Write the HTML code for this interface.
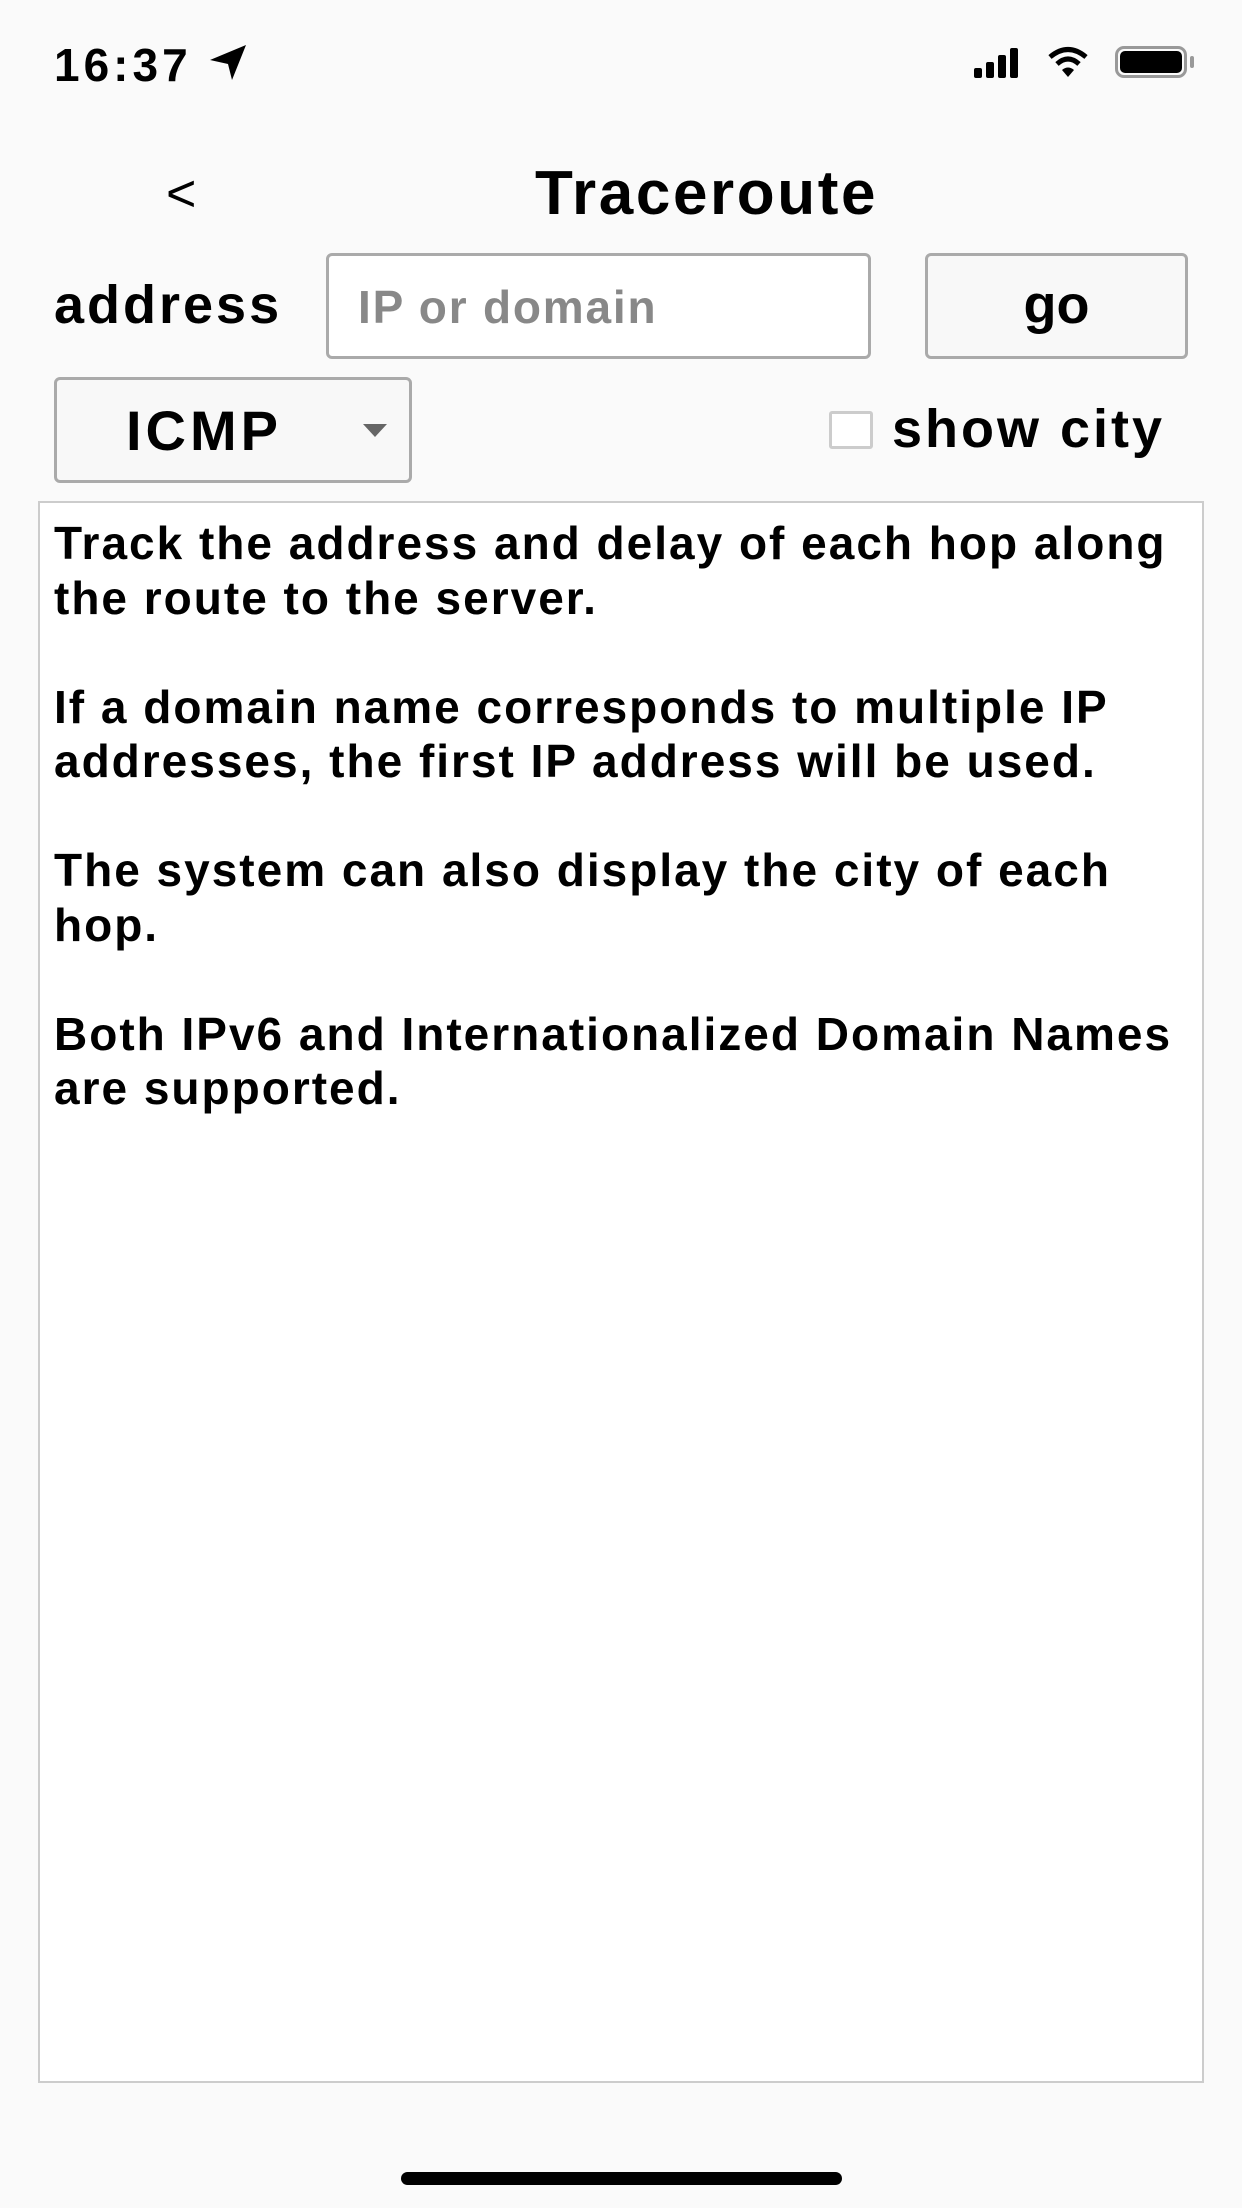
<!DOCTYPE html>
<html><head><meta charset="utf-8"><style>
*{margin:0;padding:0;box-sizing:border-box}
body{width:1242px;height:2208px;background:#fafafa;font-family:"Liberation Sans",sans-serif;position:relative;overflow:hidden;color:#000}
.a{position:absolute;white-space:nowrap}
</style></head><body>
<div class="a" style="left:54px;top:38px;font-size:46px;font-weight:bold;letter-spacing:4px;">16:37</div>
<svg class="a" style="left:206px;top:42px" width="46" height="40" viewBox="0 0 46 40"><path d="M4 18 L40 3 L26 38 L22 22 Z" fill="#000"/></svg>
<svg class="a" style="left:974px;top:48px" width="56" height="30"><rect x="0" y="20" width="8" height="10" rx="2"/><rect x="12" y="14" width="8" height="16" rx="2"/><rect x="24" y="7" width="8" height="23" rx="2"/><rect x="36" y="0" width="8" height="30" rx="2"/></svg>
<svg class="a" style="left:1048px;top:46px" width="40" height="32" viewBox="0 0 40 32"><path d="M2 11 Q20 -4 38 11" stroke="#000" stroke-width="5" fill="none"/><path d="M9 18 Q20 8 31 18" stroke="#000" stroke-width="5" fill="none"/><path d="M14 24 L20 31 L26 24 Q20 19 14 24Z" fill="#000"/></svg>
<div class="a" style="left:1115px;top:46px;width:72px;height:32px;border:3px solid #999;border-radius:9px;"></div>
<div class="a" style="left:1120px;top:51px;width:62px;height:22px;background:#000;border-radius:5px;"></div>
<div class="a" style="left:1190px;top:56px;width:4px;height:12px;background:#999;border-radius:2px;"></div>

<div class="a" style="left:166px;top:164px;font-size:52px;">&lt;</div>
<div class="a" style="left:535px;top:158px;font-size:62px;font-weight:bold;letter-spacing:2.6px;">Traceroute</div>

<div class="a" style="left:54px;top:274px;font-size:54px;font-weight:bold;letter-spacing:3px;">address</div>
<div class="a" style="left:326px;top:253px;width:545px;height:106px;border:3px solid #aaa;border-radius:6px;background:#fff;"></div>
<div class="a" style="left:358px;top:280px;font-size:46px;font-weight:bold;color:#888;letter-spacing:1.8px;">IP or domain</div>
<div class="a" style="left:925px;top:253px;width:263px;height:106px;border:3px solid #aaa;border-radius:6px;background:#f8f8f8;"></div>
<div class="a" style="left:925px;top:274px;width:263px;text-align:center;font-size:54px;font-weight:bold;">go</div>

<div class="a" style="left:54px;top:377px;width:358px;height:106px;border:3px solid #aaa;border-radius:6px;background:#f8f8f8;"></div>
<div class="a" style="left:126px;top:398px;font-size:56px;font-weight:bold;letter-spacing:4px;">ICMP</div>
<svg class="a" style="left:363px;top:424px" width="24" height="14"><path d="M0 0 L24 0 L12 13Z" fill="#666"/></svg>
<div class="a" style="left:829px;top:411px;width:44px;height:38px;border:3px solid #ccc;border-radius:3px;background:#fff;"></div>
<div class="a" style="left:892px;top:398px;font-size:54px;font-weight:bold;letter-spacing:3px;">show city</div>

<div class="a" style="left:38px;top:501px;width:1166px;height:1582px;border:2px solid #ccc;background:#fff;"></div>
<div class="a" style="left:54px;top:516px;font-size:46px;font-weight:bold;letter-spacing:2px;line-height:54.5px;white-space:pre;">Track the address and delay of each hop along
the route to the server.

If a domain name corresponds to multiple IP
addresses, the first IP address will be used.

The system can also display the city of each
hop.

Both IPv6 and Internationalized Domain Names
are supported.</div>

<div class="a" style="left:401px;top:2172px;width:441px;height:13px;background:#000;border-radius:7px;"></div>
</body></html>
